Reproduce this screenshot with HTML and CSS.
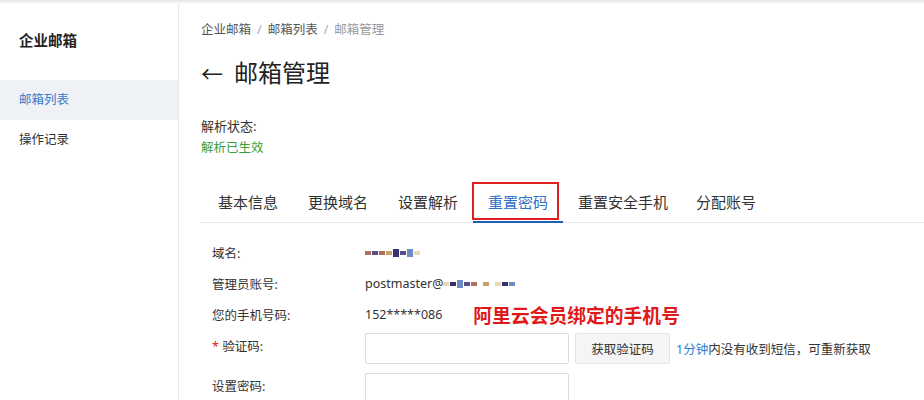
FILE: index.html
```html
<!DOCTYPE html>
<html lang="zh-CN">
<head>
  <meta charset="UTF-8">
  <meta name="viewport" content="width=device-width, initial-scale=1.0">
  <title>邮箱管理</title>
  <link rel="stylesheet" href="styles.css">
</head>
<body>
  <div class="topbar"></div>
  <div class="layout">
    <aside class="sidebar">
      <div class="brand">企业邮箱</div>
      <a class="nav-item active" href="#">邮箱列表</a>
      <a class="nav-item" href="#">操作记录</a>
    </aside>

    <main class="main">
      <div class="breadcrumb">
        <a href="#">企业邮箱</a><span class="sep">/</span><a href="#">邮箱列表</a><span class="sep">/</span><span class="current">邮箱管理</span>
      </div>

      <h1 class="title"><span class="back">&larr;</span>邮箱管理</h1>

      <div class="status">
        <div class="status-label">解析状态:</div>
        <div class="status-ok">解析已生效</div>
      </div>

      <ul class="tabs">
        <li>基本信息</li>
        <li>更换域名</li>
        <li>设置解析</li>
        <li class="active">重置密码</li>
        <li>重置安全手机</li>
        <li>分配账号</li>
      </ul>

      <form class="form">
        <div class="row">
          <label>域名:</label>
          <div class="value">
            <span class="mosaic">
              <i class="c1"></i><i class="c2"></i><i class="c1"></i><i class="c3"></i><i class="c4 tall"></i><i class="c2"></i><i class="c5 tall"></i><i class="c6"></i>
            </span>
          </div>
        </div>
        <div class="row">
          <label>管理员账号:</label>
          <div class="value">postmaster@<span class="mosaic">
              <i class="c6"></i><i class="c4"></i><i class="c5 tall"></i><i class="c2"></i><i class="c1"></i><i class="gap"></i><i class="c3"></i><i class="gap"></i><i class="c6"></i><i class="c4"></i><i class="c5"></i>
            </span></div>
        </div>
        <div class="row">
          <label>您的手机号码:</label>
          <div class="value">152*****086<span class="note">阿里云会员绑定的手机号</span></div>
        </div>
        <div class="row field">
          <label><span class="required">*</span> 验证码:</label>
          <div class="value">
            <input class="input" type="text">
            <button class="btn" type="button">获取验证码</button>
            <span class="hint"><em>1分钟</em>内没有收到短信，可重新获取</span>
          </div>
        </div>
        <div class="row field">
          <label>设置密码:</label>
          <div class="value">
            <input class="input" type="password">
          </div>
        </div>
      </form>
    </main>
  </div>
</body>
</html>
```

FILE: styles.css
```css
body {
  margin: 0;
  font-family: "Noto Sans", "Noto Sans CJK SC", sans-serif;
  color: #333;
  background: #fff;
  overflow: hidden;
}
.topbar {
  height: 4px;
  background: linear-gradient(#e4e4e4, #fff);
}
.layout {
  display: flex;
  min-height: 396px;
}
.sidebar {
  width: 178px;
  border-right: 1px solid #e8e8e8;
  display: flex;
  flex-direction: column;
}
.brand {
  font-size: 14.5px;
  font-weight: bold;
  line-height: 20px;
  padding: 26px 19px 0;
  height: 50px;
  color: #222;
}
.nav-item {
  display: block;
  height: 40px;
  line-height: 40px;
  padding-left: 19px;
  font-size: 12.5px;
  color: #333;
  text-decoration: none;
}
.nav-item.active {
  background: #eef1f6;
  color: #3a79c8;
}
.main {
  flex: 1;
  padding: 16px 0 0 22px;
}
.breadcrumb {
  font-size: 12.5px;
  line-height: 20px;
  color: #666;
}
.breadcrumb a {
  color: #555;
  text-decoration: none;
}
.breadcrumb .sep {
  margin: 0 6px;
  color: #aaa;
}
.breadcrumb .current {
  color: #999;
}
.title {
  margin: 17px 0 0;
  font-size: 24px;
  font-weight: normal;
  line-height: 32px;
  color: #222;
}
.back {
  display: inline-block;
  width: 20px;
  margin-right: 13px;
  font-size: 22px;
}
.status {
  margin-top: 27px;
  font-size: 13px;
  line-height: 21px;
}
.status-ok {
  color: #3aa03a;
  font-size: 12.5px;
}
.tabs {
  display: flex;
  list-style: none;
  margin: 24px 0 0 -1px;
  padding: 0 0 0 3px;
  border-bottom: 1px solid #e6e6e6;
}
.tabs li {
  position: relative;
  padding: 10px 15px 9px;
  font-size: 15px;
  line-height: 20px;
  color: #333;
  border-bottom: 2px solid transparent;
  margin-bottom: -1px;
}
.tabs li:nth-child(5) {
  padding-right: 13px;
}
.tabs li.active {
  color: #2f6fc7;
  border-bottom-color: #1f5eb6;
}
.tabs li.active::after {
  content: "";
  position: absolute;
  left: -1px;
  right: 4px;
  top: 0;
  bottom: 1px;
  border: 2px solid #e02020;
}
.form {
  margin-top: 14px;
  padding-left: 11px;
  font-size: 12.5px;
}
.row {
  display: flex;
  align-items: center;
  height: 31px;
}
.row.field {
  align-items: flex-start;
  margin-top: 3px;
}
.row.field + .row.field {
  margin-top: 9px;
}
.row label {
  width: 153px;
  flex-shrink: 0;
}
.row.field label {
  line-height: 27px;
}
.required {
  color: #e02020;
}
.value {
  display: flex;
  align-items: center;
}
.mosaic {
  display: inline-flex;
  align-items: center;
  height: 10px;
}
.mosaic i {
  display: inline-block;
  width: 6px;
  height: 4px;
  margin-right: 1px;
}
.mosaic i.tall {
  height: 8px;
}
.mosaic i.gap {
  width: 4px;
}
.mosaic .c1 { background: #b07060; }
.mosaic .c2 { background: #5a4e88; }
.mosaic .c3 { background: #c9a06a; }
.mosaic .c4 { background: #3b2e6e; }
.mosaic .c5 { background: #6c8bc7; }
.mosaic .c6 { background: #e8d8b8; }
.note {
  margin-left: 31px;
  font-size: 18.8px;
  font-weight: bold;
  color: #e01a1a;
}
.input {
  width: 204px;
  height: 31px;
  box-sizing: border-box;
  border: 1px solid #dcdcdc;
  border-radius: 2px;
  margin: 0;
}
.btn {
  width: 95px;
  height: 31px;
  margin-left: 6px;
  border: 1px solid #e6e6e6;
  border-radius: 2px;
  background: #f5f5f5;
  font-family: inherit;
  font-size: 12.5px;
  color: #333;
}
.hint {
  margin-left: 6px;
  font-size: 12.5px;
}
.hint em {
  font-style: normal;
  color: #2f7bd0;
}
```
